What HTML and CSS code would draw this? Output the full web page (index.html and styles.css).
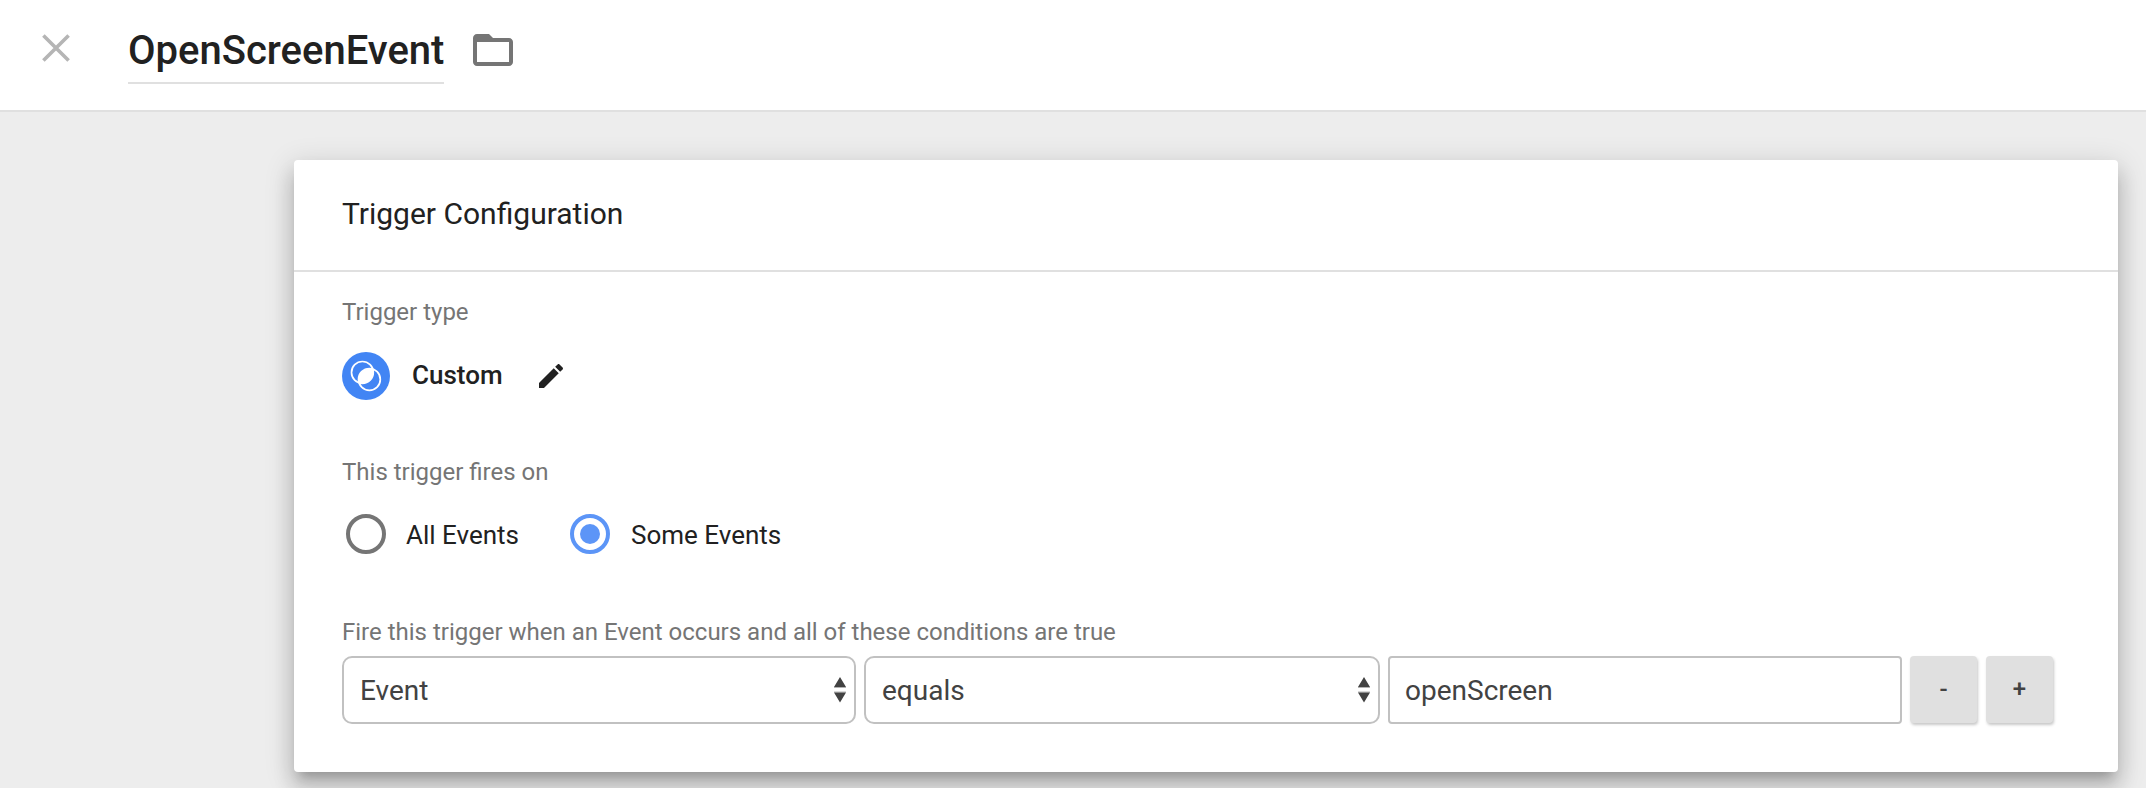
FILE: index.html
```html
<!DOCTYPE html>
<html lang="en">
<head>
<meta charset="utf-8">
<title>OpenScreenEvent</title>
<link rel="stylesheet" href="styles.css">
</head>
<body>
<header class="topbar">
  <svg class="close" viewBox="0 0 28 28"><path d="M1.4 1.4 26.6 26.6M26.6 1.4 1.4 26.6"/></svg>
  <h1 class="name">OpenScreenEvent</h1>
  <svg class="folder" viewBox="0 0 24 24"><path d="M20 6h-8l-2-2H4c-1.100 0-1.990.9-1.990 2L2 18c0 1.100.9 2 2 2h16c1.100 0 2-.9 2-2V8c0-1.100-.9-2-2-2zm0 12H4V8h16v10z"/></svg>
</header>
<main class="card">
  <h2 class="card-title">Trigger Configuration</h2>
  <div class="card-body">
    <div class="label">Trigger type</div>
    <div class="type">
      <svg class="type-icon" viewBox="0 0 48 48">
        <defs><clipPath id="left"><circle cx="20.400" cy="20.400" r="10.900"/></clipPath></defs>
        <circle class="disc" cx="24" cy="24" r="24"/>
        <circle class="lens" cx="27.400" cy="27.400" r="10.900" clip-path="url(#left)"/>
        <circle class="ring" cx="20.400" cy="20.400" r="10.900"/>
        <circle class="ring" cx="27.400" cy="27.400" r="10.900"/>
      </svg>
      <span class="type-name">Custom</span>
      <svg class="edit" viewBox="0 0 24 24"><path d="M3 17.250V21h3.750L17.810 9.940l-3.750-3.750L3 17.250zM20.710 7.040c.39-.39.39-1.020 0-1.410l-2.340-2.340c-.39-.39-1.020-.39-1.410 0l-1.830 1.830 3.750 3.750 1.830-1.830z"/></svg>
    </div>
    <div class="label">This trigger fires on</div>
    <div class="radios">
      <span class="radio"></span><span class="radio-text all">All Events</span>
      <span class="radio on"></span><span class="radio-text some">Some Events</span>
    </div>
    <div class="label">Fire this trigger when an Event occurs and all of these conditions are true</div>
    <div class="condition">
      <div class="field select">Event<svg class="arrows" viewBox="0 0 12 26"><path d="M6 0 12 10H0zM0 15.500H12L6 25.500z"/><path class="shade" d="M0 10H12V11H0zM0 14.500H12V15.500H0z"/></svg></div>
      <div class="field select">equals<svg class="arrows" viewBox="0 0 12 26"><path d="M6 0 12 10H0zM0 15.500H12L6 25.500z"/><path class="shade" d="M0 10H12V11H0zM0 14.500H12V15.500H0z"/></svg></div>
      <div class="field input">openScreen</div>
      <div class="button">-</div>
      <div class="button">+</div>
    </div>
  </div>
</main>
</body>
</html>
```
FILE: styles.css
```css
* { box-sizing: border-box; }
body {
  margin: 0;
  height: 788px;
  overflow: hidden;
  background: #ededed;
  font-family: Roboto, sans-serif;
  color: #212121;
}
svg { display: block; flex: none; }
.topbar {
  display: flex;
  align-items: flex-start;
  height: 112px;
  padding: 26px 42px 0;
  background: #fff;
  border-bottom: 2px solid #e0e0e0;
}
.close {
  width: 28px;
  height: 28px;
  margin: 8px 58px 0 0;
  fill: none;
  stroke: #b5b5b5;
  stroke-width: 3.6;
}
.name {
  width: 316px;
  height: 58px;
  margin: 0 24.500px 0 0;
  border-bottom: 2px solid #e0e0e0;
  font-size: 40px;
  font-weight: 500;
  line-height: 50px;
  white-space: nowrap;
}
.folder { width: 48px; height: 48px; fill: #757575; }
.card {
  height: 612px;
  margin: 48px 28px 0 294px;
  background: #fff;
  border-radius: 4px;
  box-shadow: 0 10px 10px -6px rgba(0,0,0,.2), 0 16px 20px 2px rgba(0,0,0,.14), 0 6px 28px 4px rgba(0,0,0,.12);
}
.card-title {
  margin: 0;
  height: 112px;
  padding-left: 48px;
  border-bottom: 2px solid #e0e0e0;
  font-size: 30px;
  font-weight: 400;
  line-height: 108px;
}
.card-body { padding: 24px 64px 0 48px; }
.label { font-size: 24px; line-height: 32px; color: #757575; }
.type { display: flex; align-items: center; height: 48px; margin: 24px 0 56px; }
.type-icon { width: 48px; height: 48px; }
.disc { fill: #4285f4; }
.lens { fill: #fff; }
.ring { fill: none; stroke: #fff; stroke-width: 1.7; }
.type-name { width: 123px; margin-left: 22px; padding-bottom: 2px; font-size: 26px; font-weight: 500; line-height: 44px; }
.edit { width: 32px; height: 32px; fill: #212121; }
.radios { display: flex; align-items: center; height: 40px; margin: 26px 0 62px 4px; font-size: 26px; }
.radio {
  display: flex;
  align-items: center;
  justify-content: center;
  width: 40px;
  height: 40px;
  border: 4px solid #757575;
  border-radius: 50%;
}
.radio.on { border-color: #5c95f7; }
.radio.on::after { content: ""; width: 20px; height: 20px; border-radius: 50%; background: #5c95f7; }
.radio-text { margin-left: 20px; padding-top: 2px; line-height: 40px; }
.all { width: 164px; }
.some { margin-left: 21px; }
.condition {
  display: grid;
  grid-template-columns: 514px 516px 514px 67px 67px;
  column-gap: 8px;
  height: 68px;
  margin-top: 8px;
}
.field {
  display: flex;
  align-items: center;
  padding-left: 16px;
  border: 2px solid #c1c1c1;
  border-radius: 4px;
  font-size: 28px;
  color: #424242;
}
.input { padding-left: 15px; }
.select { justify-content: space-between; padding-right: 8px; border-radius: 10px; }
.arrows { width: 12px; height: 26px; fill: #424242; }
.shade { opacity: .4; }
.button {
  height: 67px;
  background: #e0e0e0;
  border-radius: 4px;
  box-shadow: 1px 2px 3px rgba(0,0,0,.22);
  color: #424242;
  font-size: 24px;
  font-weight: 500;
  line-height: 66px;
  text-align: center;
}
.button:last-child { margin-left: 1px; margin-right: -1px; }
```
